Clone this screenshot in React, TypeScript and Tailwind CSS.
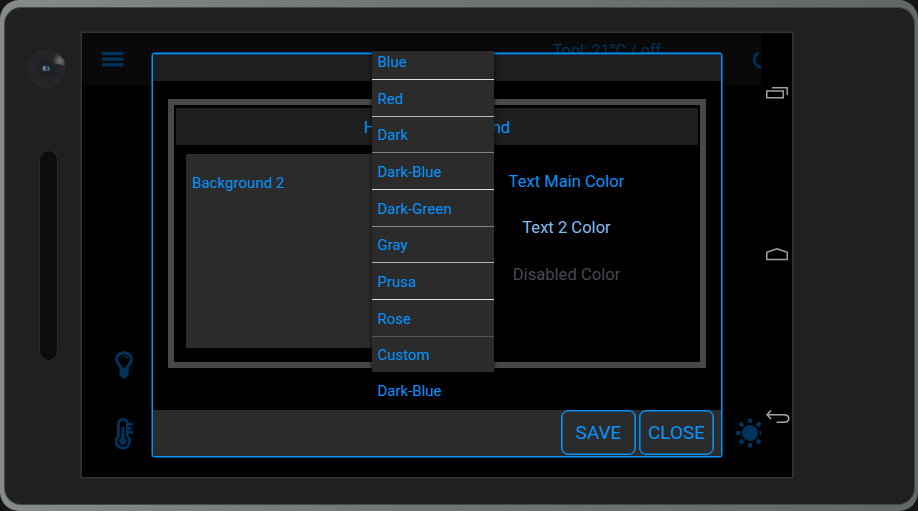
import type { ReactNode } from "react";

type Option = { name: string; height: string; line: string };

const options: Option[] = [
  { name: "Blue", height: "h-[29px]", line: "border-[#dedede]" },
  { name: "Red", height: "h-[37px]", line: "border-[#bababa]" },
  { name: "Dark", height: "h-[36px]", line: "border-[#808080]" },
  { name: "Dark-Blue", height: "h-[37px]", line: "border-[#dedede]" },
  { name: "Dark-Green", height: "h-[37px]", line: "border-[#868686]" },
  { name: "Gray", height: "h-[36px]", line: "border-[#b4b4b4]" },
  { name: "Prusa", height: "h-[37px]", line: "border-[#dedede]" },
  { name: "Rose", height: "h-[37px]", line: "border-[#555555]" },
];

function MenuIcon() {
  return (
    <svg width="22" height="15" viewBox="0 0 22 15" fill="#00335b">
      <rect x="0" y="0" width="21.500" height="3.200" rx=".6" />
      <rect x="0" y="5.600" width="21.500" height="3.200" rx=".6" />
      <rect x="0" y="11.200" width="21.500" height="3.200" rx=".6" />
    </svg>
  );
}

function PowerIcon() {
  return (
    <svg width="8" height="18" viewBox="0 0 8 18" fill="none" stroke="#00335b" strokeWidth="2.6">
      <path d="M5.2 .8C2.6 2.600 1.3 4.800 1.300 7.600C1.300 11.400 4 14.600 8 15.600" />
    </svg>
  );
}

function BulbIcon() {
  return (
    <svg width="18" height="28" viewBox="0 0 18 28" fill="none">
      <path
        d="M6 17.500C5.600 13.500 1.600 12.600 1.600 8.300C1.600 4.500 4.900 1.700 9 1.700C13.100 1.700 16.400 4.500 16.400 8.300C16.400 12.600 12.400 13.500 12 17.500"
        stroke="#00335b"
        strokeWidth="3"
      />
      <path d="M8.500 5.200C11 5 12.700 6.300 13 8.200" stroke="#00335b" strokeWidth="1.300" />
      <path d="M4.300 16.500H13.800L14 18.500L13.300 19.500L14 21L13.300 22L13.900 23.500L12 25.300C11.500 27 10.500 27.300 9 27.300C7.500 27.300 6.500 27 6.100 25.300L4.200 23.500L4.800 22L4.200 21L4.800 19.500Z" fill="#00335b" />
    </svg>
  );
}

function ThermometerIcon() {
  return (
    <svg width="19" height="32" viewBox="0 0 19 32" fill="none">
      <path
        d="M3.400 18.300V6C3.400 3.300 5.300 1.500 7.900 1.500C10.500 1.500 12.400 3.300 12.400 6V18.300C16.900 22.500 14 30 7.900 30C1.800 30 -1.100 22.500 3.400 18.300Z"
        stroke="#00335b"
        strokeWidth="2.800"
      />
      <path d="M6.400 9H9.500V20C13.300 22 11.700 26.700 7.900 26.700C4.100 26.700 2.500 22 6.400 20Z" fill="#00335b" />
      <path d="M12.500 6.200H18M12.500 10.300H16.500M12.500 14.400H18" stroke="#00335b" strokeWidth="2.700" />
    </svg>
  );
}

function SunIcon() {
  return (
    <svg width="25" height="30" viewBox="0 0 25 30">
      <circle cx="14" cy="15" r="8" fill="#00335b" />
      <path
        d="M14 .5V5M14 25V29.500M0 15H4.500M23.500 15H28M3.700 4.700L7 8M21 22L24.300 25.300M3.700 25.300L7 22M21 8L24.300 4.700"
        stroke="#00335b"
        strokeWidth="4"
      />
    </svg>
  );
}

function RecentIcon() {
  return (
    <svg width="22" height="12" viewBox="0 0 22 12" fill="none" stroke="#a0a0a0">
      <path d="M.75 3.950H17.250V10.750H.75Z" strokeWidth="1.500" />
      <path d="M6 .7H21.200V8" strokeWidth="1.500" />
    </svg>
  );
}

function HomeIcon() {
  return (
    <svg width="22" height="13" viewBox="0 0 22 13" fill="none" stroke="#a0a0a0" strokeWidth="1.500">
      <path d="M.8 4.300L11 .8L21.200 4.300V11.500H.8Z" />
    </svg>
  );
}

function BackIcon() {
  return (
    <svg width="24" height="14" viewBox="0 0 24 14" fill="none" stroke="#a6a6a6" strokeWidth="1.500">
      <path d="M5 .6L1 4.800L5 9M1 4.800H17.500C20.800 4.800 22.800 6.100 22.800 8.500C22.800 11 20.800 12.200 18 12.200H10.500" />
    </svg>
  );
}

function Camera() {
  return (
    <svg width="40" height="40" viewBox="0 0 40 40">
      <defs>
        <radialGradient id="lens">
          <stop offset="0" stopColor="#1c1c1e" />
          <stop offset=".45" stopColor="#212224" />
          <stop offset="1" stopColor="#26272b" />
        </radialGradient>
        <radialGradient id="glare" cx="33" cy="12" r="10" gradientUnits="userSpaceOnUse">
          <stop offset="0" stopColor="#7a7878" />
          <stop offset=".5" stopColor="#444242" />
          <stop offset="1" stopColor="#242424" stopOpacity="0" />
        </radialGradient>
      </defs>
      <circle cx="19.500" cy="19.500" r="19.200" fill="url(#lens)" />
      <path d="M27 2C33 5 38 10 38.300 17L26 14C21 12 22 5 27 2Z" fill="url(#glare)" />
      <ellipse cx="19" cy="19.500" rx="4.300" ry="3.300" fill="#2d3044" />
      <ellipse cx="17.500" cy="19.500" rx="2" ry="2.400" fill="#787da8" />
      <ellipse cx="21.200" cy="19.700" rx="1.500" ry="2" fill="#397f80" />
      <circle cx="19.500" cy="19.500" r="1.100" fill="#141526" />
    </svg>
  );
}

function DialogButton({ children }: { children: ReactNode }) {
  return (
    <button className="h-[45px] w-[75px] rounded-[7px] border border-[#0594fb] bg-[#2b2b2b] text-[19px] leading-none text-[#0594fb] shadow-[inset_0_0_0_0.6px_#0594fb]">
      {children}
    </button>
  );
}

function ThemeDropdown() {
  return (
    <div className="absolute left-[290px] top-[18px] w-[122px] text-[15px] text-[#0594fb]">
      <div className="bg-[#2b2b2b] shadow-[0_0_4px_rgba(0,0,0,0.8)]">
        {options.map((o) => (
          <div key={o.name} className={"flex items-end border-b pl-[5.5px] " + o.height + " " + o.line}>
            <span className="h-[26px] leading-[18px]">{o.name}</span>
          </div>
        ))}
        <div className="flex h-[35px] items-end pl-[5.5px]">
          <span className="h-[26px] leading-[18px]">Custom</span>
        </div>
      </div>
      <div className="pl-[5.5px] pt-[10px] leading-[18px]">Dark-Blue</div>
    </div>
  );
}

function ThemeDialog() {
  return (
    <div className="absolute left-[70px] top-[20px] flex h-[404px] w-[570px] flex-col rounded-[3px] border border-[#0594fb] bg-black shadow-[0_0_0_0.5px_#0594fb]">
      <div className="h-[27px] shrink-0 bg-[#1e1e1e] shadow-[inset_0_1px_0_#0b4672]" />
      <div className="flex grow pl-[15px] pt-[18px]">
        <div className="flex h-[269px] w-[538px] flex-col border-[6px] border-[#484848] px-[2px] pt-[3px]">
          <div className="h-[37px] w-[522px] shrink-0 bg-[#1e1e1e] text-center text-[16.7px] leading-[40px] text-[#0594fb]">
            Header Background
          </div>
          <div className="flex pl-[10px] pt-[9px]">
            <div className="h-[194px] w-[246px] shrink-0 bg-[#2b2b2b] pl-[6px] pt-[20px] text-[15.1px] leading-[19px] text-[#0594fb]">
              Background 2
            </div>
            <div className="flex w-[266px] flex-col items-center pl-[3px] pt-[18px] text-[16.6px] leading-[20px]">
              <span className="text-[#0594fb]">Text Main Color</span>
              <span className="mt-[26px] text-[#84bff0]">Text 2 Color</span>
              <span className="mt-[27px] text-[#484a52]">Disabled Color</span>
            </div>
          </div>
        </div>
      </div>
      <div className="flex h-[46px] shrink-0 justify-end gap-[3px] bg-[#2b2b2b] pr-[7px]">
        <DialogButton>SAVE</DialogButton>
        <DialogButton>CLOSE</DialogButton>
      </div>
    </div>
  );
}

export default function App() {
  return (
    <div className="h-[511px] w-[918px] overflow-hidden bg-[#141414] font-['Roboto',sans-serif]">
      <div className="h-[511px] w-[918px] rounded-[19px] bg-[linear-gradient(90deg,#858b86_0%,#707773_45%,#626866_100%)] pb-[7.5px] pl-[5px] pr-[4.5px] pt-[7.5px]">
        <div className="flex h-full rounded-[16px] bg-[#202020] shadow-[0_0_0_1px_#454a48]">
          <div className="flex w-[76px] shrink-0 flex-col pl-[22px] pt-[41px]">
            <Camera />
            <div className="ml-[12px] mt-[61.5px] h-[211px] w-[19px] rounded-full border border-[#2b2b2b] bg-[#0d0d0d]" />
          </div>
          <div className="pt-[24.5px]">
            <div className="relative flex h-[446px] w-[712px] border border-[#343434] bg-black shadow-[0_0_0_0.5px_#343434]">
              <div className="flex w-[679px] flex-col">
                <div className="flex h-[52px] shrink-0 items-start justify-between bg-[#090909] pl-[20px]">
                  <div className="pt-[18.7px]">
                    <MenuIcon />
                  </div>
                  <div className="flex gap-[92px]">
                    <span className="pt-[7px] text-[16px] leading-[22px] text-[#00335b]">Tool: 21°C / off</span>
                    <div className="pt-[19px]">
                      <PowerIcon />
                    </div>
                  </div>
                </div>
                <div className="flex grow items-end justify-between pb-[27px] pl-[33px]">
                  <div className="flex flex-col gap-[39px]">
                    <BulbIcon />
                    <ThermometerIcon />
                  </div>
                  <div className="pb-[2px]">
                    <SunIcon />
                  </div>
                </div>
              </div>
              <div className="flex w-[31px] flex-col pl-[5px] pt-[54px]">
                <RecentIcon />
                <div className="pt-[149px]">
                  <HomeIcon />
                </div>
                <div className="pt-[149px]">
                  <BackIcon />
                </div>
              </div>
              <ThemeDialog />
              <ThemeDropdown />
            </div>
          </div>
        </div>
      </div>
    </div>
  );
}
